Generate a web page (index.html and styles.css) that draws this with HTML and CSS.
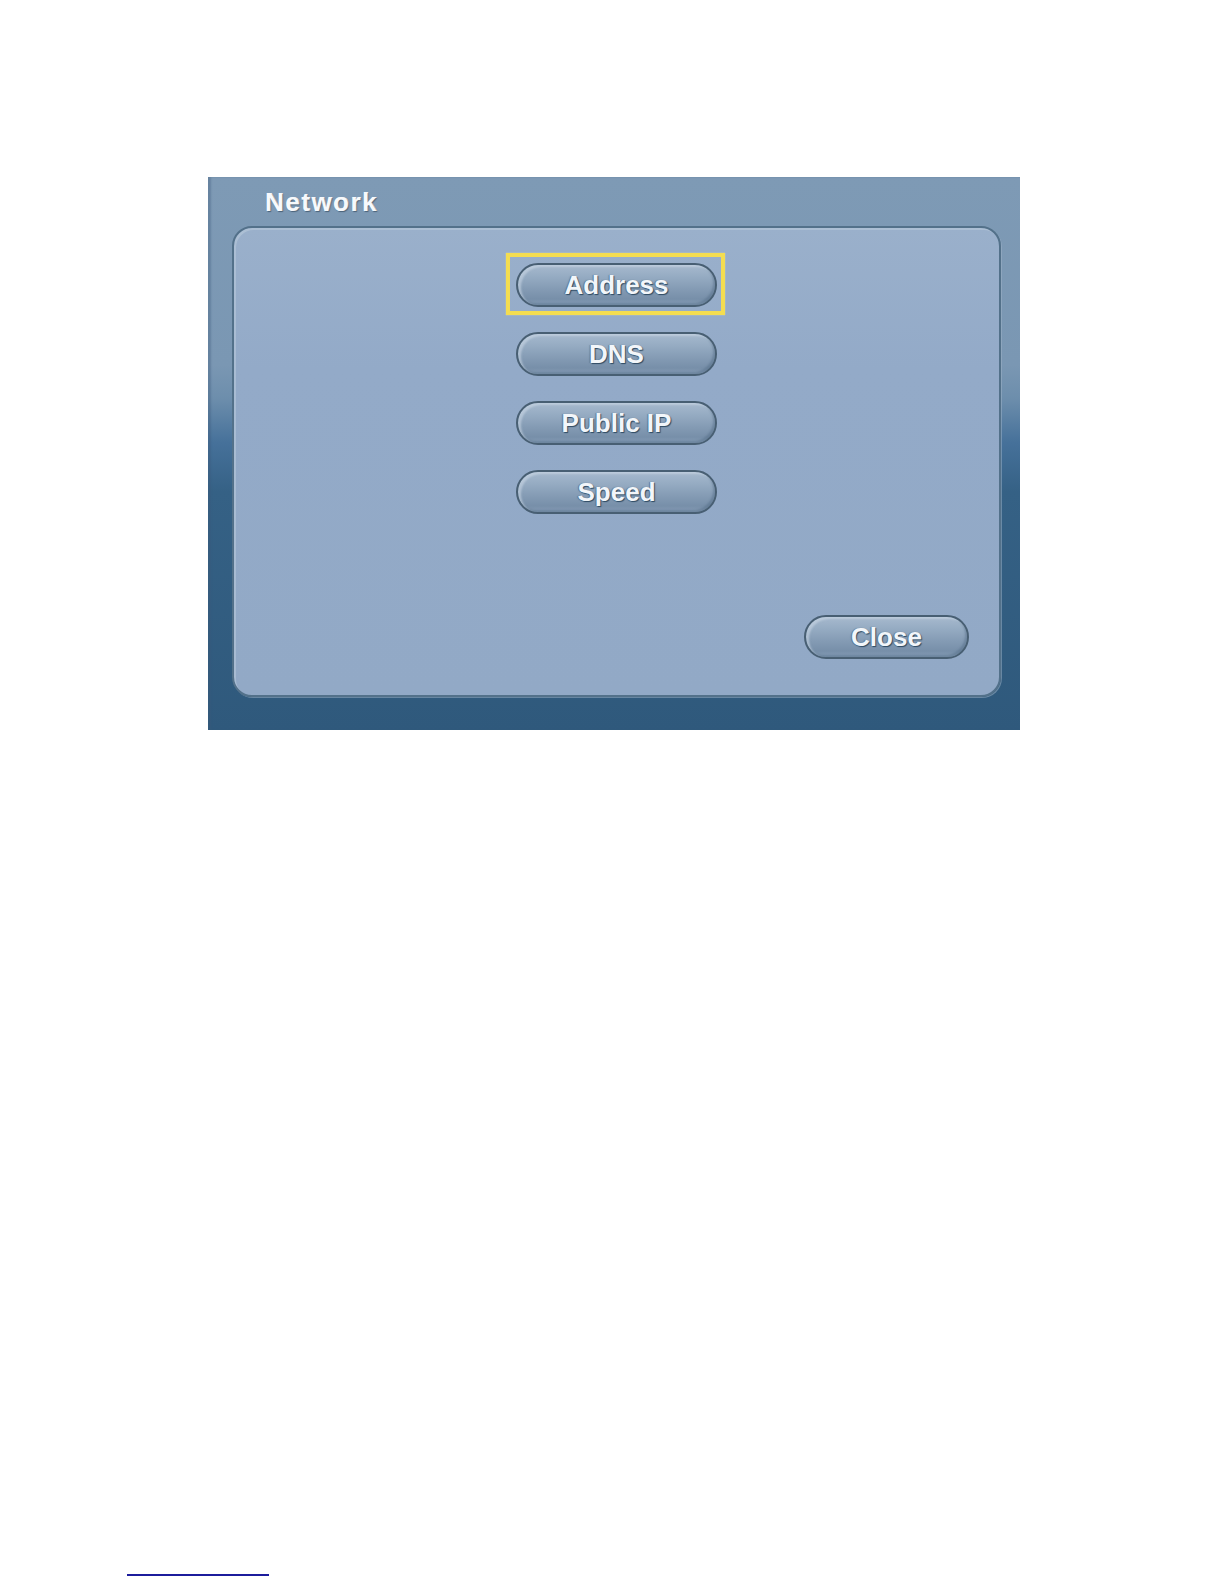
FILE: index.html
```html
<!DOCTYPE html>
<html>
<head>
<meta charset="utf-8">
<title>Network</title>
<link rel="stylesheet" href="styles.css">
</head>
<body>
<div class="page">
  <div class="frame">
    <div class="title">Network</div>
    <div class="panel">
      <div class="menu">
        <div class="btn focused">Address</div>
        <div class="btn">DNS</div>
        <div class="btn">Public IP</div>
        <div class="btn">Speed</div>
      </div>
      <div class="footer">
        <div class="btn close">Close</div>
      </div>
    </div>
  </div>
  <div class="rule"></div>
</div>
</body>
</html>
```

FILE: styles.css
```css
html, body {
  margin: 0;
  padding: 0;
  background: #ffffff;
}

.page {
  width: 1224px;
  height: 1584px;
  padding-top: 177px;
  box-sizing: border-box;
  display: flex;
  flex-direction: column;
}

.frame {
  margin-left: 208px;
  width: 812px;
  height: 553px;
  display: flex;
  flex-direction: column;
  background: linear-gradient(to bottom,
    #7e9ab5 0%,
    #7a97b3 34%,
    #6d8eac 40%,
    #46719a 48%,
    #356185 57%,
    #2f597c 100%);
  box-shadow: inset 3px 0 2px rgba(60, 90, 120, 0.35);
}

.title {
  height: 49px;
  box-sizing: border-box;
  padding-left: 57px;
  padding-top: 10px;
  font-family: "Liberation Sans", Arial, sans-serif;
  font-weight: bold;
  font-size: 26px;
  letter-spacing: 1.5px;
  color: #f7f9fc;
  text-shadow: 1px 1px 1px rgba(40, 60, 80, 0.6), 0.5px 0 0 #f7f9fc;
  line-height: 30px;
}

.panel {
  margin: 0 19px 33px 24px;
  flex: 1;
  border: 2px solid #53718a;
  border-radius: 20px;
  background: linear-gradient(to bottom, #9ab0cb 0%, #93aac8 30%, #92a9c6 100%);
  box-shadow: inset 2px 2px 0 rgba(190, 205, 222, 0.5), 1px 1px 0 rgba(160, 180, 200, 0.5);
  display: flex;
  flex-direction: column;
  padding: 35px 30px 36px 30px;
}

.menu {
  display: flex;
  flex-direction: column;
  align-items: center;
  gap: 25px;
}

.btn {
  position: relative;
  width: 201px;
  height: 44px;
  box-sizing: border-box;
  border: 2px solid #485f73;
  border-radius: 22px;
  background: linear-gradient(to bottom,
    #a6b9ce 0%,
    #95abc2 30%,
    #849bb4 60%,
    #778fa9 85%,
    #869db6 100%);
  box-shadow: inset 3px 2px 2px rgba(205, 218, 232, 0.55), inset -2px -2px 2px rgba(70, 95, 120, 0.35);
  display: flex;
  align-items: center;
  justify-content: center;
  font-family: "Liberation Sans", Arial, sans-serif;
  font-weight: bold;
  font-size: 26px;
  color: #f2f6fa;
  text-shadow: 1px 1px 1px #2e4a62, -1px 0 1px rgba(46, 74, 98, 0.5);
  line-height: 1;
}

.focused::after {
  content: "";
  position: absolute;
  left: -12px;
  right: -10px;
  top: -12px;
  bottom: -10px;
  border: 4px solid #f4dd50;
  box-shadow: 0 0 1px rgba(255, 240, 150, 0.8);
}

.footer {
  margin-top: auto;
  display: flex;
  justify-content: flex-end;
}

.close {
  width: 165px;
}

.rule {
  margin-top: auto;
  margin-left: 127px;
  margin-bottom: 8px;
  width: 142px;
  height: 2px;
  background: #1c1c9c;
}
```
